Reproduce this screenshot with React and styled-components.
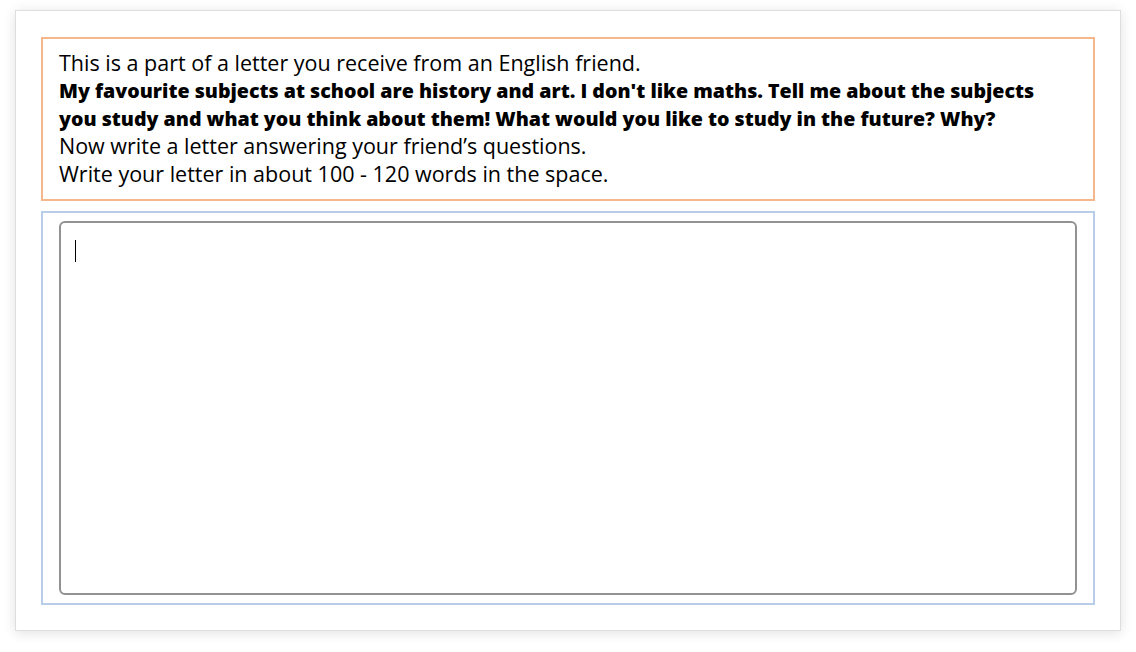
import React from 'react'
import styled, { createGlobalStyle } from 'styled-components'

const GlobalStyle = createGlobalStyle`
    html, body {
        margin: 0;
        padding: 0;
        background: #fff;
    }
    body {
        font-family: 'Open Sans', 'Liberation Sans', sans-serif;
    }
`

function App() {
    return (
        <>
            <GlobalStyle />
            <Page>
                <Card>
                    <Prompt>
                        <Line>This is a part of a letter you receive from an English friend.</Line>
                        <Quote>
                            My favourite subjects at school are history and art. I don't like maths. Tell me about the subjects
                            <br />
                            you study and what you think about them! What would you like to study in the future? Why?
                        </Quote>
                        <Line>Now write a letter answering your friend’s questions.</Line>
                        <Line>Write your letter in about 100 - 120 words in the space.</Line>
                    </Prompt>
                    <AnswerBox>
                        <Field>
                            <Answer spellCheck={false} />
                            <Caret />
                        </Field>
                    </AnswerBox>
                </Card>
            </Page>
        </>
    )
}

export default App

const Page = styled.div`
    padding: 10px 15px 20px 15px;
    width: 1106px;
`

const Card = styled.div`
    background: #fff;
    border: 1px solid #dedede;
    box-shadow: 0 2px 12px rgba(0, 0, 0, 0.12);
    padding: 26px 25px 25px 25px;
    display: flex;
    flex-direction: column;
    gap: 10px;
`

const Prompt = styled.div`
    border: 2px solid #f4b88c;
    padding: 10px 16px 11px 16px;
    color: #000;
    font-size: 21.5px;
    line-height: 27.75px;
`

const Line = styled.div`
    white-space: nowrap;
`

const Quote = styled.div`
    font-family: 'Open Sans', sans-serif;
    font-weight: 800;
    font-size: 19.6px;
    white-space: nowrap;
`

const AnswerBox = styled.div`
    border: 2px solid #b7cde9;
    padding: 8px 16px;
    display: flex;
`

const Field = styled.div`
    position: relative;
    flex: 1;
    display: flex;
`

const Answer = styled.textarea`
    flex: 1;
    height: 374px;
    box-sizing: border-box;
    border: 2px solid #929292;
    border-radius: 6px;
    padding: 14px;
    font-family: 'Open Sans', sans-serif;
    font-size: 18px;
    resize: none;
    outline: none;
`

const Caret = styled.span`
    position: absolute;
    left: 16px;
    top: 19px;
    width: 1px;
    height: 22px;
    background: #000;
    pointer-events: none;
`
